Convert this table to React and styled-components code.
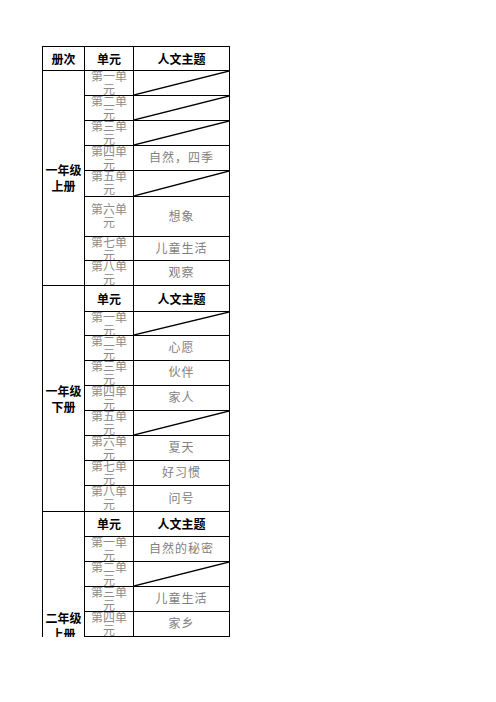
import React from 'react';
import styled, { createGlobalStyle } from 'styled-components';

const sections = [
  {
    grade: ['一年级', '上册'],
    header: null,
    rows: [
      [25, '第一单元', null],
      [25, '第二单元', null],
      [25, '第三单元', null],
      [25, '第四单元', '自然，四季'],
      [26, '第五单元', null],
      [40, '第六单元', '想象'],
      [24, '第七单元', '儿童生活'],
      [25, '第八单元', '观察'],
    ],
  },
  {
    grade: ['一年级', '下册'],
    header: 26,
    rows: [
      [24, '第一单元', null],
      [25, '第二单元', '心愿'],
      [25, '第三单元', '伙伴'],
      [25, '第四单元', '家人'],
      [25, '第五单元', null],
      [25, '第六单元', '夏天'],
      [25, '第七单元', '好习惯'],
      [26, '第八单元', '问号'],
    ],
  },
  {
    grade: ['二年级', '上册'],
    header: 25,
    rows: [
      [25, '第一单元', '自然的秘密'],
      [25, '第二单元', null],
      [25, '第三单元', '儿童生活'],
      [25, '第四单元', '家乡'],
      [26, '第五单元', '思维方法'],
      [26, '第六单元', '伟人'],
      [26, '第七单元', '想象'],
      [26, '第八单元', '相处'],
    ],
  },
];

export default function App() {
  return (
    <>
      <GlobalStyle />
      <Sheet>
        <Row $h={24}>
          <HeadCell $w={42}>册次</HeadCell>
          <HeadCell $w={49}>单元</HeadCell>
          <HeadCell $w={96}>人文主题</HeadCell>
        </Row>
        {sections.map((s, i) => (
          <Section key={i}>
            <GradeCell>
              {s.grade[0]}
              <br />
              {s.grade[1]}
            </GradeCell>
            <Body>
              {s.header && (
                <Row $h={s.header}>
                  <HeadCell $w={49}>单元</HeadCell>
                  <HeadCell $w={96}>人文主题</HeadCell>
                </Row>
              )}
              {s.rows.map(([h, unit, theme], j) => (
                <Row key={j} $h={h}>
                  <UnitCell>
                    <span>{unit}</span>
                  </UnitCell>
                  <ThemeCell>
                    {theme}
                    {!theme && (
                      <Slash viewBox='0 0 100 100' preserveAspectRatio='none'>
                        <line
                          x1='0'
                          y1='100'
                          x2='100'
                          y2='0'
                          stroke='#000'
                          strokeWidth='1.3'
                          vectorEffect='non-scaling-stroke'
                        />
                      </Slash>
                    )}
                  </ThemeCell>
                </Row>
              ))}
            </Body>
          </Section>
        ))}
      </Sheet>
    </>
  );
}

const GlobalStyle = createGlobalStyle`
  html, body {
    margin: 0;
    padding: 0;
    background: #fff;
  }
  body {
    font-family: "Liberation Serif", "Noto Sans CJK SC", serif;
  }
`;

const Sheet = styled.div`
  margin: 46px 0 0 42px;
  width: 188px;
  height: 591px;
  overflow: hidden;
  box-sizing: border-box;
  border-top: 1px solid #000;
  border-left: 1px solid #000;
`;

const Row = styled.div`
  display: flex;
  height: ${(p) => p.$h}px;
  flex-shrink: 0;
`;

const Cell = styled.div`
  box-sizing: border-box;
  border-right: 1px solid #000;
  border-bottom: 1px solid #000;
  display: flex;
  align-items: center;
  justify-content: center;
  text-align: center;
  overflow: hidden;
  font-size: 12px;
`;

const HeadCell = styled(Cell)`
  width: ${(p) => p.$w}px;
  font-family: "Noto Sans CJK SC", sans-serif;
  font-weight: 700;
  color: #000;
  line-height: 14px;
`;

const Section = styled.div`
  display: flex;
`;

const GradeCell = styled(Cell)`
  width: 42px;
  flex-shrink: 0;
  font-family: "Noto Sans CJK SC", sans-serif;
  font-weight: 700;
  color: #000;
  line-height: 16px;
`;

const Body = styled.div`
  display: flex;
  flex-direction: column;
  width: 145px;
`;

const UnitCell = styled(Cell)`
  width: 49px;
  padding: 0 2px;
  align-items: safe center;
  color: #8c8c8c;
  line-height: 13px;
  word-break: break-all;
`;

const ThemeCell = styled(Cell)`
  position: relative;
  width: 96px;
  color: #808080;
  line-height: 14px;
  letter-spacing: 1px;
`;

const Slash = styled.svg`
  position: absolute;
  left: 0;
  top: 0;
  width: 100%;
  height: 100%;
`;
